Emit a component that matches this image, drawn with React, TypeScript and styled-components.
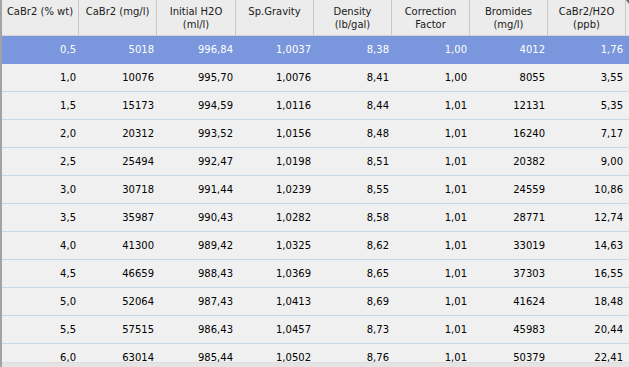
import React from "react";
import styled, { createGlobalStyle } from "styled-components";

const Global = createGlobalStyle`
  html, body { margin: 0; padding: 0; background: #f0f0f0; }
  body { font-family: "DejaVu Sans", Verdana, sans-serif; }
`;

const COLS = "77px 78px 79px 78px 78px 78px 78px 78px";

const Frame = styled.div`
  width: 629px;
  height: 367px;
  overflow: hidden;
  box-sizing: border-box;
  border-left: 2px solid #a3a3a3;
  background: #f0f0f0;
  display: flex;
  flex-direction: column;
  position: relative;
`;

const Header = styled.div`
  display: grid;
  grid-template-columns: ${COLS} 1fr;
  height: 36px;
  flex: none;
  background: #ececec;
  border-bottom: 1px solid #d4d4d4;
  box-sizing: border-box;
`;

const HeadCell = styled.div`
  font-size: 10px;
  line-height: 13px;
  color: #1a1a1a;
  text-align: center;
  padding-top: 5px;
  border-right: 1px solid #c8c8c8;
  box-sizing: border-box;
  white-space: pre-line;
`;

const HeadFill = styled.div`
  background: #ececec;
  position: relative;
`;

const Grip = styled.div`
  position: absolute;
  right: 0;
  top: 0;
  width: 0;
  height: 0;
  border-top: 4px solid #6a6a6a;
  border-left: 3px solid transparent;
`;

const Body = styled.div`
  display: flex;
  flex-direction: column;
  flex: 1;
  overflow: hidden;
`;

const Row = styled.div<{ $selected?: boolean }>`
  display: grid;
  grid-template-columns: ${COLS} 1fr;
  height: 28px;
  flex: none;
  box-sizing: border-box;
  background: ${(p) => (p.$selected ? "#7a96dd" : "#f0f0f0")};
  border-bottom: 1px solid ${(p) => (p.$selected ? "#7a96dd" : "#cad7ea")};
  color: ${(p) => (p.$selected ? "#ffffff" : "#000000")};
`;

const Cell = styled.div`
  font-size: 10px;
  line-height: 27px;
  text-align: right;
  padding-right: 3px;
  box-sizing: border-box;
  white-space: nowrap;
`;

const BottomEdge = styled.div`
  position: absolute;
  left: 0;
  right: 0;
  bottom: 0;
  height: 4px;
  background: #e4e4e4;
  border-top: 1px solid #dcdcdc;
`;

const headers = [
  "CaBr2 (% wt)",
  "CaBr2 (mg/l)",
  "Initial H2O\n(ml/l)",
  "Sp.Gravity",
  "Density\n(lb/gal)",
  "Correction\nFactor",
  "Bromides\n(mg/l)",
  "CaBr2/H2O\n(ppb)",
];

const data: string[][] = [
  ["0,5", "5018", "996,84", "1,0037", "8,38", "1,00", "4012", "1,76"],
  ["1,0", "10076", "995,70", "1,0076", "8,41", "1,00", "8055", "3,55"],
  ["1,5", "15173", "994,59", "1,0116", "8,44", "1,01", "12131", "5,35"],
  ["2,0", "20312", "993,52", "1,0156", "8,48", "1,01", "16240", "7,17"],
  ["2,5", "25494", "992,47", "1,0198", "8,51", "1,01", "20382", "9,00"],
  ["3,0", "30718", "991,44", "1,0239", "8,55", "1,01", "24559", "10,86"],
  ["3,5", "35987", "990,43", "1,0282", "8,58", "1,01", "28771", "12,74"],
  ["4,0", "41300", "989,42", "1,0325", "8,62", "1,01", "33019", "14,63"],
  ["4,5", "46659", "988,43", "1,0369", "8,65", "1,01", "37303", "16,55"],
  ["5,0", "52064", "987,43", "1,0413", "8,69", "1,01", "41624", "18,48"],
  ["5,5", "57515", "986,43", "1,0457", "8,73", "1,01", "45983", "20,44"],
  ["6,0", "63014", "985,44", "1,0502", "8,76", "1,01", "50379", "22,41"],
];

export default function App() {
  return (
    <>
      <Global />
      <Frame>
        <Header>
          {headers.map((h) => (
            <HeadCell key={h}>{h}</HeadCell>
          ))}
          <HeadFill>
            <Grip />
          </HeadFill>
        </Header>
        <Body>
          {data.map((r, i) => (
            <Row key={i} $selected={i === 0}>
              {r.map((c, j) => (
                <Cell key={j}>{c}</Cell>
              ))}
              <div />
            </Row>
          ))}
        </Body>
        <BottomEdge />
      </Frame>
    </>
  );
}
